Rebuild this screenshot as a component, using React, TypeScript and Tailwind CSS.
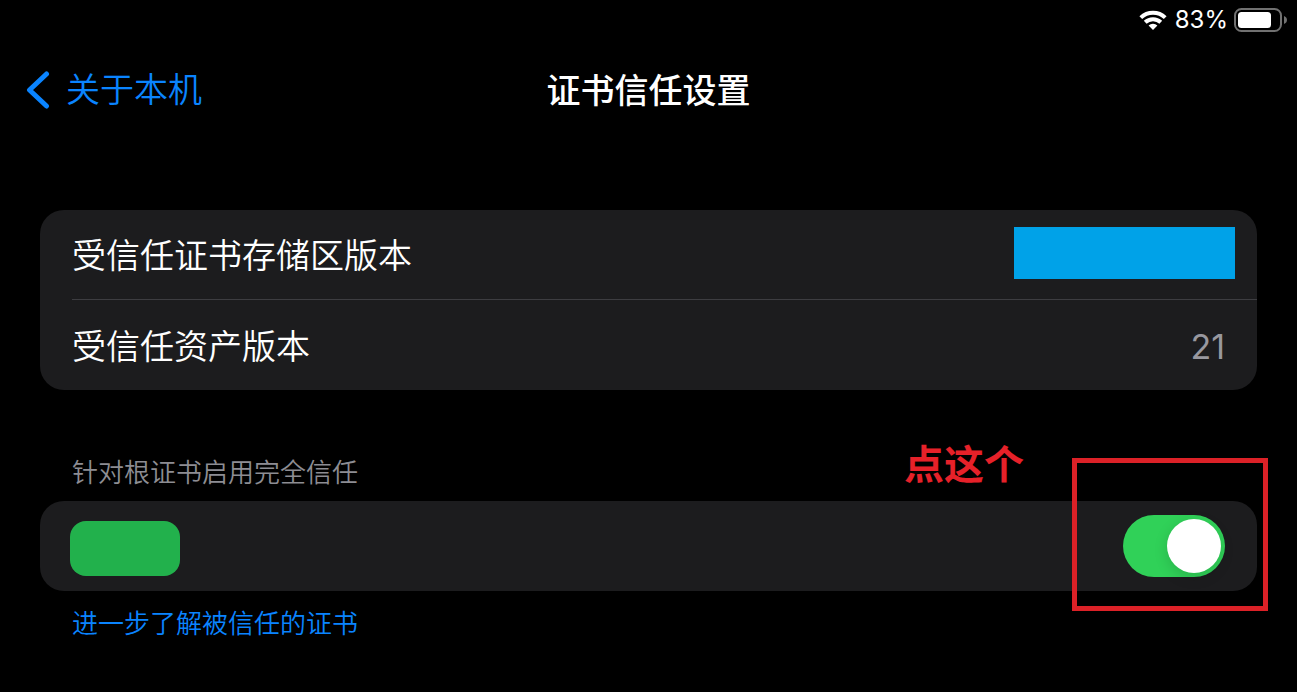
import { useState } from "react";

function WifiIcon() {
  return (
    <svg viewBox="0 0 28 20" className="h-5 w-7" aria-hidden="true">
      <g fill="none" stroke="#fff" strokeWidth="4">
        <path d="M1.8 7.6A17.6 17.6 0 0 1 26.2 7.6" />
        <path d="M6.2 12.3A11.200 11.200 0 0 1 21.8 12.3" />
      </g>
      <path d="M14 20l-4.4-4.500a6.300 6.300 0 0 1 8.800 0z" fill="#fff" />
    </svg>
  );
}

function BatteryIcon() {
  return (
    <svg viewBox="0 0 54 24" className="h-6 w-[54px]" aria-hidden="true">
      <rect x="1" y="1" width="46" height="22" rx="6.5" fill="none" stroke="#717171" strokeWidth="2" />
      <rect x="4" y="4" width="33" height="16" rx="3.5" fill="#fff" />
      <path d="M50 8c1.8.7 3 2.200 3 4s-1.200 3.300-3 4z" fill="#717171" />
    </svg>
  );
}

function BackIcon() {
  return (
    <svg viewBox="0 0 24 38" className="h-[38px] w-6" aria-hidden="true">
      <path
        d="M20.500 3L3.500 19l17 16"
        fill="none"
        stroke="#0a84ff"
        strokeWidth="5"
        strokeLinecap="round"
        strokeLinejoin="round"
      />
    </svg>
  );
}

export default function App() {
  const [trusted, setTrusted] = useState(true);

  return (
    <div className="min-h-screen bg-black font-['Inter','Noto_Sans_CJK_SC',sans-serif] text-white">
      <div className="flex h-10 items-center justify-end gap-2 pr-[9px]">
        <WifiIcon />
        <span className="-mr-0.5 text-2xl">83%</span>
        <BatteryIcon />
      </div>

      <header className="grid h-[100px] grid-cols-[1fr_auto_1fr] items-center px-[26px]">
        <a href="#about" className="flex items-center gap-4 text-[34px] leading-[50px] font-[350] text-[#0a84ff]">
          <BackIcon />
          关于本机
        </a>
        <h1 className="pt-0.5 text-[34px] leading-[50px] font-medium">证书信任设置</h1>
      </header>

      <main className="px-10 pt-[70px]">
        <dl className="rounded-3xl bg-[#1c1c1e] pl-8 text-[34px]">
          <div className="flex h-[90px] items-center justify-between border-b border-[#3d3d41] pr-[22px]">
            <dt className="pt-0.5 font-[350]">受信任证书存储区版本</dt>
            <dd className="mb-[3px] h-[52px] w-[221px] bg-[#00a2e8]" />
          </div>
          <div className="flex h-[90px] items-center justify-between pr-8">
            <dt className="pt-0.5 font-[350]">受信任资产版本</dt>
            <dd className="pt-0.5 text-[#98989f]">21</dd>
          </div>
        </dl>

        <section>
          <h2 className="px-8 pt-16 pb-[9px] text-[26px] leading-[38px] font-[350] text-[#8d8d93]">
            针对根证书启用完全信任
          </h2>
          <div className="relative flex h-[90px] items-center justify-between rounded-3xl bg-[#1c1c1e] pr-8 pl-[30px]">
            <div className="mt-1 h-[55px] w-[110px] rounded-2xl bg-[#22b14c]" />
            <label className="relative block h-[62px] w-[102px]">
              <input
                type="checkbox"
                role="switch"
                aria-label="针对根证书启用完全信任"
                checked={trusted}
                onChange={(e) => setTrusted(e.target.checked)}
                className="peer block h-full w-full appearance-none rounded-full bg-[#39393d] checked:bg-[#30d158]"
              />
              <span className="pointer-events-none absolute top-1 left-1 size-[54px] rounded-full bg-white shadow-[0_4px_14px_rgba(0,0,0,0.15)] peer-checked:left-11" />
            </label>
            <div className="pointer-events-none absolute -top-[43px] -right-[11px] h-[153px] w-[196px] border-5 border-[#dc2127]" />
            <div className="pointer-events-none absolute -top-[66px] right-[233px] text-[40px] leading-[60px] font-bold text-[#e62129]">
              点这个
            </div>
          </div>
          <a href="#learn-more" className="block px-8 pt-[14px] text-[26px] leading-[38px] font-[350] text-[#0a84ff]">
            进一步了解被信任的证书
          </a>
        </section>
      </main>
    </div>
  );
}
